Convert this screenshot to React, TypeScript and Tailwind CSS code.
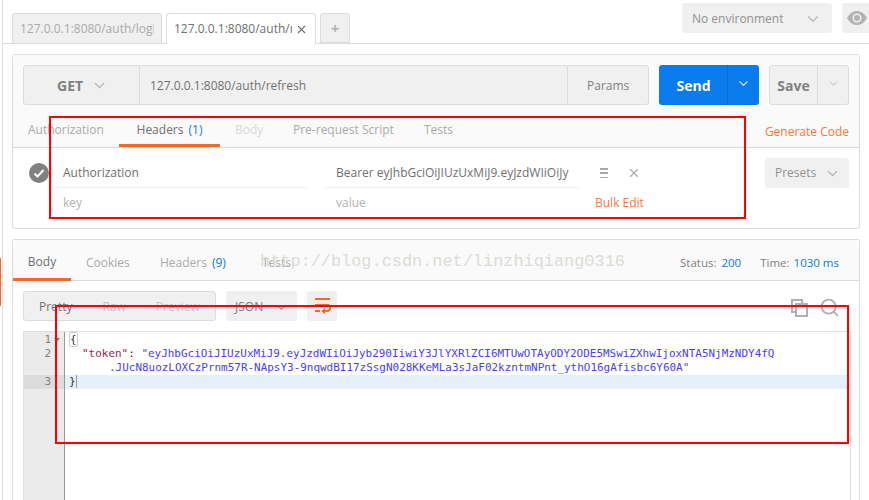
import { ChevronDown, Search, X } from "lucide-react";

function CheckBadge() {
  return (
    <svg width="20" height="20" viewBox="0 0 20 20">
      <circle cx="10" cy="10" r="10" fill="#808080" />
      <path d="M5.5 10.5l3 3 6-6.5" fill="none" stroke="#fff" strokeWidth="2" />
    </svg>
  );
}

function EyeIcon() {
  return (
    <svg width="20" height="14" viewBox="0 0 20 14">
      <path d="M0 7c2.5-4.4 6-7 10-7s7.500 2.600 10 7c-2.500 4.400-6 7-10 7S2.500 11.400 0 7z" fill="#b3b3b3" />
      <circle cx="10" cy="7" r="4.500" fill="#f0f0f0" />
      <circle cx="10" cy="7" r="3" fill="#b3b3b3" />
    </svg>
  );
}

function WrapIcon() {
  return (
    <svg width="17" height="16" viewBox="0 0 17 16" fill="none" stroke="#f26b26" strokeWidth="2">
      <path d="M1 1h15M1 7h13c3 0 3 6-1 6H9" />
      <path d="M1 13h5" />
      <path d="M11 10.500L8.500 13l2.500 2.500" strokeWidth="1.500" />
    </svg>
  );
}

function CopyIcon() {
  return (
    <svg width="17" height="18" viewBox="0 0 17 18" fill="none" stroke="#b0b0b0" strokeWidth="2">
      <path d="M5 13H1V1h10v4" />
      <rect x="5" y="5" width="11" height="12" />
    </svg>
  );
}

export default function App() {
  const mono = "font-['DejaVu_Sans_Mono',monospace] text-[10.96px] leading-[14px]";

  return (
    <div className="relative flex h-[500px] w-[869px] overflow-hidden bg-white font-['Open_Sans',sans-serif] text-[12px] text-[#808080]">
      {/* left edge of the sidebar */}
      <div className="flex w-[3px] shrink-0 flex-col border-r border-[#e0e0e0] pt-[258px]">
        <div className="h-[48px] w-[1px] bg-[#f26b26]" />
      </div>

      <div className="flex min-w-0 flex-1 flex-col">
        {/* tab bar */}
        <div className="flex h-[44px] shrink-0 border-b border-[#dcdcdc] pl-[9px]">
          <div className="mt-[13px] flex h-[31px] w-[150px] items-center overflow-hidden rounded-t-[3px] border border-[#dcdcdc] bg-[#f0f0f0] pl-[7px] whitespace-nowrap text-[#aaaaaa]">
            <span className="w-[134px] overflow-hidden">127.0.0.1:8080/auth/login</span>
          </div>
          <div className="mt-[13px] ml-[4px] flex h-[31px] w-[150px] items-center rounded-t-[3px] border border-b-0 border-[#dcdcdc] bg-white pl-[7px] whitespace-nowrap text-[#707070]">
            <span className="w-[118px] overflow-hidden">127.0.0.1:8080/auth/refresh</span>
            <X size={13} strokeWidth={2} className="ml-[3px] text-[#707070]" />
          </div>
          <div className="mt-[13px] ml-[4px] flex h-[30px] w-[30px] items-center justify-center rounded-t-[3px] border border-[#dcdcdc] bg-[#f0f0f0] text-[15px] font-bold text-[#b3b3b3]">
            +
          </div>
          <div className="mt-[3px] ml-auto flex h-[30px] w-[150px] items-center rounded-[3px] bg-[#f0f0f0] pt-[1px] pl-[10px] text-[#909090]">
            No environment
            <ChevronDown size={18} strokeWidth={1.500} className="mr-[10px] ml-auto text-[#b3b3b3]" />
          </div>
          <div className="mt-[3px] ml-[10px] flex h-[30px] w-[27px] items-center rounded-l-[3px] bg-[#f0f0f0] pl-[5px]">
            <EyeIcon />
          </div>
        </div>

        {/* request panel */}
        <div className="mt-[10px] ml-[9px] h-[175px] w-[848px] shrink-0 rounded-[3px] border border-[#dcdcdc]">
          <div className="h-[93px] border-b border-[#dcdcdc] bg-[#fafafa]">
            <div className="flex pt-[10px] pl-[10px]">
              <div className="flex h-[40px] w-[626px] rounded-[3px] border border-[#dcdcdc] bg-[#f0f0f0]">
                <div className="flex w-[116px] items-center border-r border-[#dcdcdc] pl-[33px] text-[14px] font-bold text-[#808080]">
                  GET
                  <ChevronDown size={17} strokeWidth={1.500} className="ml-[8px] text-[#aaaaaa]" />
                </div>
                <div className="flex flex-1 items-center pt-[1px] pl-[10px] text-[#707070]">
                  127.0.0.1:8080/auth/refresh
                </div>
                <div className="flex w-[81px] items-center border-l border-[#dcdcdc] pt-[1px] pl-[19px] text-[#808080]">
                  Params
                </div>
              </div>
              <div className="ml-[10px] flex h-[40px] w-[100px] rounded-[3px] bg-[#097bed] text-white">
                <div className="flex w-[69px] items-center justify-center border-r border-[#0a6cce] pl-[1px] text-[14px] font-bold">
                  Send
                </div>
                <div className="flex flex-1 items-center justify-center">
                  <ChevronDown size={15} strokeWidth={2} className="mb-[3px] text-[#cfe3fa]" />
                </div>
              </div>
              <div className="ml-[10px] flex h-[40px] w-[80px] rounded-[3px] border border-[#dcdcdc] bg-[#f0f0f0]">
                <div className="flex w-[48px] items-center justify-center border-r border-[#dcdcdc] text-[14px] font-bold text-[#808080]">
                  Save
                </div>
                <div className="flex flex-1 items-center justify-center">
                  <ChevronDown size={13} strokeWidth={1.500} className="mb-[3px] text-[#aaaaaa]" />
                </div>
              </div>
            </div>
            <div className="flex h-[42px]">
              <div className="mt-[8px] flex h-[34px] w-[106px] items-start pt-[8px] pl-[15px] text-[#aaaaaa]">Authorization</div>
              <div className="mt-[8px] flex h-[34px] w-[101px] items-start justify-center border-b-[3px] border-[#f26b26] pt-[8px] text-[#707070]">
                Headers<span className="ml-[5px] text-[#097bed]">(1)</span>
              </div>
              <div className="mt-[8px] flex h-[34px] w-[73px] items-start pt-[8px] pl-[15px] text-[#d9d9d9]">Body</div>
              <div className="mt-[8px] flex h-[34px] w-[131px] items-start pt-[8px] whitespace-nowrap text-[#aaaaaa]">Pre-request Script</div>
              <div className="mt-[8px] flex h-[34px] w-[60px] items-start pt-[8px] text-[#aaaaaa]">Tests</div>
              <div className="mt-[9px] ml-auto pt-[9px] pr-[10px] text-[#f47b3c]">Generate Code</div>
            </div>
          </div>

          <div className="flex">
            <div className="flex w-[40px] justify-end pt-[15px] pr-[4px]">
              <CheckBadge />
            </div>
            <div className="w-[253px] pt-[10px]">
              <div className="flex h-[30px] items-center border-b border-[#eeeeee] pl-[10px] text-[#707070]">Authorization</div>
              <div className="flex h-[30px] items-center pl-[10px] text-[#b3b3b3]">key</div>
            </div>
            <div className="ml-[20px] w-[253px] pt-[10px]">
              <div className="flex h-[30px] items-center overflow-hidden border-b border-[#eeeeee] pl-[10px] whitespace-nowrap text-[#707070]">Bearer eyJhbGciOiJIUzUxMiJ9.eyJzdWIiOiJy</div>
              <div className="flex h-[30px] items-center pl-[10px] text-[#b3b3b3]">value</div>
            </div>
            <div className="ml-[15px] w-[60px] pt-[10px]">
              <div className="flex h-[30px] items-center pl-[6px]">
                <span className="flex h-[10px] w-[8px] flex-col justify-between">
                  <span className="h-[1.500px] bg-[#aaaaaa]" />
                  <span className="h-[1.500px] bg-[#aaaaaa]" />
                  <span className="h-[1.500px] bg-[#aaaaaa]" />
                </span>
                <X size={14} strokeWidth={2} className="ml-[19px] text-[#aaaaaa]" />
              </div>
              <div className="flex h-[30px] items-center pl-[1px] whitespace-nowrap text-[#f47b3c]">Bulk Edit</div>
            </div>
            <div className="ml-[111px] pt-[10px]">
              <div className="flex h-[30px] w-[84px] items-center rounded-[3px] bg-[#f0f0f0] pl-[10px] text-[#909090]">
                Presets
                <ChevronDown size={17} strokeWidth={1.500} className="ml-[8px] text-[#aaaaaa]" />
              </div>
            </div>
          </div>
        </div>

        {/* response panel */}
        <div className="mt-[10px] ml-[9px] flex min-h-0 w-[848px] flex-1 flex-col rounded-t-[3px] border border-b-0 border-[#dcdcdc]">
          <div className="flex h-[41px] shrink-0 border-b border-[#dcdcdc] bg-[#fafafa]">
            <div className="flex h-[41px] w-[58px] items-center justify-center border-b-[3px] border-[#f26b26] pt-[6px] text-[#707070]">Body</div>
            <div className="flex h-[40px] w-[89px] items-center pt-[6px] pl-[15px] text-[#aaaaaa]">Cookies</div>
            <div className="flex h-[40px] w-[102px] items-center pt-[6px] text-[#aaaaaa]">
              Headers<span className="ml-[5px] text-[#097bed]">(9)</span>
            </div>
            <div className="flex h-[40px] w-[60px] items-center pt-[6px] text-[#aaaaaa]">Tests</div>
            <div className="ml-auto flex h-[40px] items-center pt-[6px] pr-[20px] text-[11.5px]">
              <span className="text-[#808080]">Status:</span>
              <span className="ml-[5px] text-[#097bed]">200</span>
              <span className="ml-[19px] text-[#808080]">Time:</span>
              <span className="ml-[4px] text-[#097bed]">1030 ms</span>
            </div>
          </div>

          <div className="flex h-[50px] shrink-0 items-start pt-[10px] pl-[10px]">
            <div className="flex h-[30px] w-[193px] items-center rounded-[3px] border border-[#dcdcdc] bg-[#f0f0f0] pt-[2px] text-[#c4c4c4]">
              <span className="ml-[15px] text-[#707070]">Pretty</span>
              <span className="ml-[30px]">Raw</span>
              <span className="ml-[30px]">Preview</span>
            </div>
            <div className="ml-[10px] flex h-[30px] w-[71px] items-center rounded-[3px] bg-[#f0f0f0] pt-[2px] pl-[9px] text-[#808080]">
              JSON
              <ChevronDown size={15} strokeWidth={2} className="ml-[11px] text-[#999999]" />
            </div>
            <div className="ml-[10px] flex h-[30px] w-[30px] items-center justify-center rounded-[3px] bg-[#f0f0f0]">
              <WrapIcon />
            </div>
            <div className="mt-[6px] ml-auto flex items-center pr-[19px]">
              <CopyIcon />
              <Search size={21} strokeWidth={2.200} className="ml-[11px] text-[#b0b0b0]" />
            </div>
          </div>

          <div className={`mr-[8px] ml-[10px] flex min-h-0 flex-1 border-t border-r border-l border-[#e0e0e0] ${mono}`}>
            <div className="w-[41px] shrink-0 border-r border-[#999999] bg-[#ebebeb] pt-[1px] text-[#808080]">
              <div className="relative flex h-[14px] justify-end pr-[13px]">
                1
                <span className="absolute top-[5px] right-[4px] h-0 w-0 border-x-[3px] border-t-[4px] border-x-transparent border-t-[#808080]" />
              </div>
              <div className="flex h-[14px] justify-end pr-[13px]">2</div>
              <div className="h-[14px]" />
              <div className="flex h-[14px] justify-end bg-[#dcdcdc] pr-[13px]">3</div>
            </div>
            <div className="min-w-0 flex-1 pt-[1px] whitespace-pre">
              <div className="h-[14px] pl-[4px] text-[#333333]">
                <span className="rounded-[2px] border border-[#cccccc]">{"{"}</span>
              </div>
              <div className="h-[14px] pl-[17px]">
                <span className="text-[#a11d4d]">"token"</span>
                <span className="text-[#333333]">: </span>
                <span className="text-[#4a3dfb]">"eyJhbGciOiJIUzUxMiJ9.eyJzdWIiOiJyb290IiwiY3JlYXRlZCI6MTUwOTAyODY2ODE5MSwiZXhwIjoxNTA5NjMzNDY4fQ</span>
              </div>
              <div className="h-[14px] pl-[44px] text-[#4a3dfb]">.JUcN8uozLOXCzPrnm57R-NApsY3-9nqwdBI17zSsgN028KKeMLa3sJaF02kzntmNPnt_ythO16gAfisbc6Y60A"</div>
              <div className="h-[14px] bg-[#e6f0fb] pl-[4px] text-[#333333]">
                {"}"}<span className="border-l border-[#999999]" />
              </div>
            </div>
          </div>
        </div>
      </div>

      {/* watermark and the red annotation boxes lie over the page */}
      <div className="absolute top-[251px] left-[260px] font-['Liberation_Mono',monospace] text-[16.9px] leading-[22px] whitespace-nowrap text-[#dcdcd6]">
        http://blog.csdn.net/linzhiqiang0316
      </div>
      <div className="absolute top-[116px] left-[49px] h-[103px] w-[697px] border-2 border-[#ff0000]" />
      <div className="absolute top-[305px] left-[55px] h-[139px] w-[794px] border-2 border-[#ff0000]" />
    </div>
  );
}
